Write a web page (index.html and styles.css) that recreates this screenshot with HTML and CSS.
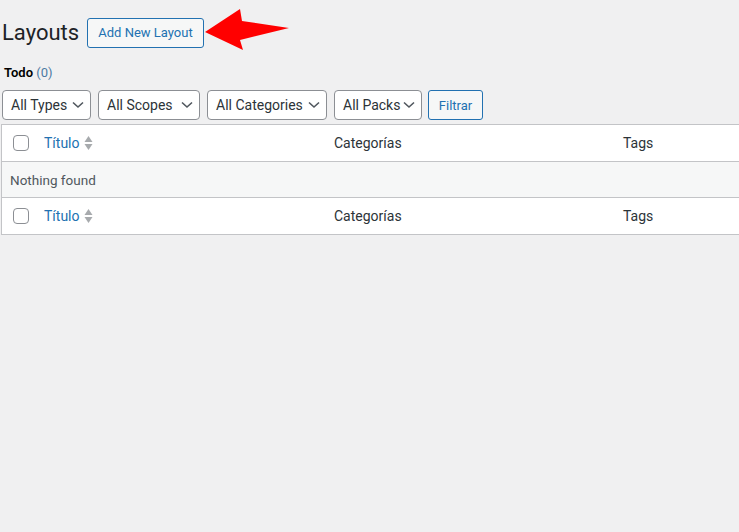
FILE: index.html
```html
<!DOCTYPE html>
<html lang="es">
<head>
<meta charset="utf-8">
<title>Layouts</title>
<link rel="stylesheet" href="styles.css">
</head>
<body>
<div class="wrap">
  <div class="title-row">
    <h1 class="page-title">Layouts</h1>
    <a class="title-action" href="#">Add New Layout</a>
    <svg class="arrow" width="90" height="46" viewBox="0 0 90 46">
      <polygon points="0,23 35,0 37,12 84,19 35,31 38,41" fill="#ff0000"/>
    </svg>
  </div>
  <div class="subsubsub"><span class="current">Todo</span> <span class="count">(0)</span></div>
  <div class="filters">
    <div class="select w-types">All Types<svg class="chev" width="12" height="8" viewBox="0 0 12 8"><path d="M1 1.5 L6 6 L11 1.5" fill="none" stroke="#50575e" stroke-width="1.6"/></svg></div>
    <div class="select w-scopes">All Scopes<svg class="chev" width="12" height="8" viewBox="0 0 12 8"><path d="M1 1.5 L6 6 L11 1.5" fill="none" stroke="#50575e" stroke-width="1.6"/></svg></div>
    <div class="select w-cats">All Categories<svg class="chev" width="12" height="8" viewBox="0 0 12 8"><path d="M1 1.5 L6 6 L11 1.5" fill="none" stroke="#50575e" stroke-width="1.6"/></svg></div>
    <div class="select w-packs">All Packs<svg class="chev" width="12" height="8" viewBox="0 0 12 8"><path d="M1 1.5 L6 6 L11 1.5" fill="none" stroke="#50575e" stroke-width="1.6"/></svg></div>
    <div class="button">Filtrar</div>
  </div>
  <div class="table">
    <div class="row head">
      <div class="cell cb"><span class="checkbox"></span></div>
      <div class="cell"><a class="sort" href="#">Título</a><svg class="sort-ind" width="9" height="16" viewBox="0 0 9 16"><polygon points="4.5,1 8.5,7 0.5,7" fill="#a7aaad"/><polygon points="0.5,9 8.5,9 4.5,15" fill="#a7aaad"/></svg></div>
      <div class="cell">Categorías</div>
      <div class="cell">Tags</div>
    </div>
    <div class="row empty">
      <div class="cell full">Nothing found</div>
    </div>
    <div class="row foot">
      <div class="cell cb"><span class="checkbox"></span></div>
      <div class="cell"><a class="sort" href="#">Título</a><svg class="sort-ind" width="9" height="16" viewBox="0 0 9 16"><polygon points="4.5,1 8.5,7 0.5,7" fill="#a7aaad"/><polygon points="0.5,9 8.5,9 4.5,15" fill="#a7aaad"/></svg></div>
      <div class="cell">Categorías</div>
      <div class="cell">Tags</div>
    </div>
  </div>
</div>
</body>
</html>
```
FILE: styles.css
```css
html, body {
  margin: 0;
  padding: 0;
  background: #f0f0f1;
  overflow: hidden;
}
body {
  font-family: "Segoe UI", Roboto, "Liberation Sans", sans-serif;
  font-size: 13px;
  color: #3c434a;
}
.wrap {
  padding-left: 2px;
}
.title-row {
  display: flex;
  align-items: center;
  height: 41px;
  padding-top: 12px;
}
.page-title {
  margin: 0;
  width: 76px;
  white-space: nowrap;
  font-size: 22px;
  font-weight: 400;
  color: #1d2327;
  line-height: 29px;
}
.title-action {
  margin-left: 9px;
  box-sizing: border-box;
  height: 30px;
  width: 117px;
  display: flex;
  align-items: center;
  justify-content: center;
  border: 1px solid #2271b1;
  border-radius: 3px;
  background: #f6f7f7;
  color: #2271b1;
  text-decoration: none;
  font-size: 13px;
}
.arrow {
  margin-left: 1px;
  margin-top: -2px;
}
.subsubsub {
  margin-top: 10px;
  padding-left: 2px;
  height: 19px;
  line-height: 19px;
  font-size: 13px;
}
.subsubsub .current {
  font-weight: 600;
  color: #000;
}
.subsubsub .count {
  color: #4c7aa3;
}
.filters {
  display: flex;
  margin-top: 8px;
  height: 30px;
}
.select {
  box-sizing: border-box;
  height: 30px;
  border: 1px solid #8c8f94;
  border-radius: 4px;
  background: #fff;
  color: #2c3338;
  font-size: 14px;
  padding-left: 8px;
  display: flex;
  align-items: center;
  justify-content: space-between;
  padding-right: 6px;
  margin-right: 7px;
}
.chev {
  flex: none;
}
.w-types { width: 89px; }
.w-scopes { width: 102px; }
.w-cats { width: 120px; }
.w-packs { width: 88px; margin-right: 6px; }
.button {
  box-sizing: border-box;
  width: 55px;
  height: 30px;
  border: 1px solid #2271b1;
  border-radius: 3px;
  background: #f6f7f7;
  color: #2271b1;
  display: flex;
  align-items: center;
  justify-content: center;
  font-size: 13px;
}
.table {
  margin-top: 4px;
  margin-left: -1px;
  width: 760px;
  border: 1px solid #c3c4c7;
  background: #fff;
}
.row {
  display: grid;
  grid-template-columns: 42px 290px 289px 1fr;
  align-items: center;
  color: #2c3338;
  font-size: 14px;
}
.head {
  height: 36px;
  border-bottom: 1px solid #c3c4c7;
}
.foot {
  height: 36px;
  border-top: 1px solid #c3c4c7;
}
.empty {
  height: 35px;
  background: #f6f7f7;
  grid-template-columns: 1fr;
  color: #50575e;
  font-size: 13.5px;
}
.cell {
  display: flex;
  align-items: center;
}
.full {
  padding-left: 8px;
}
.checkbox {
  display: block;
  margin-left: 11px;
  box-sizing: border-box;
  width: 16px;
  height: 16px;
  border: 1px solid #8c8f94;
  border-radius: 4px;
  background: #fff;
}
.sort {
  color: #2271b1;
  text-decoration: none;
}
.sort-ind {
  margin-left: 4px;
}
```
